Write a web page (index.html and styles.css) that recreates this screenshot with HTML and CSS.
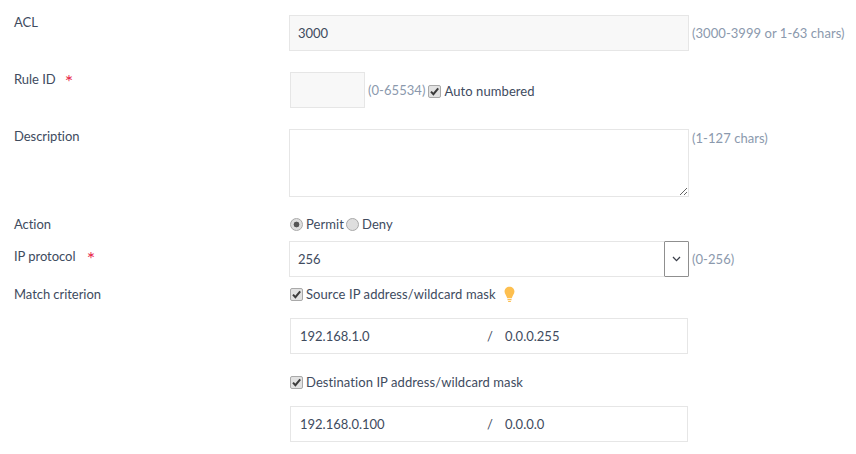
FILE: index.html
```html
<!DOCTYPE html>
<html lang="en">
<head>
<meta charset="utf-8">
<title>ACL rule</title>
<link rel="stylesheet" href="styles.css">
</head>
<body>
<form class="form">
  <div class="row row-acl">
    <label class="label">ACL</label>
    <div class="control">
      <input class="field field-wide field-muted" type="text" value="3000">
      <span class="hint">(3000-3999 or 1-63 chars)</span>
    </div>
  </div>
  <div class="row row-rule">
    <label class="label">Rule ID <span class="req">*</span></label>
    <div class="control control-rule">
      <input class="field field-short field-muted" type="text">
      <span class="hint">(0-65534)</span>
      <span class="check-item">
        <span class="box"><svg viewBox="0 0 13 13" width="13" height="13"><path d="M3 6.600 5.400 9.200 10.200 3.400" fill="none" stroke="#3c3c3c" stroke-width="2"/></svg></span>
        <span class="opt">Auto numbered</span>
      </span>
    </div>
  </div>
  <div class="row row-desc">
    <label class="label">Description</label>
    <div class="control control-top">
      <textarea class="area"></textarea>
      <span class="hint hint-top">(1-127 chars)</span>
    </div>
  </div>
  <div class="row row-action">
    <label class="label label-line">Action</label>
    <div class="control control-radio">
      <span class="radio radio-on"></span><span class="opt">Permit</span>
      <span class="radio"></span><span class="opt">Deny</span>
    </div>
  </div>
  <div class="row row-proto">
    <label class="label label-proto">IP protocol <span class="req req-proto">*</span></label>
    <div class="control">
      <div class="combo">
        <input class="combo-input" type="text" value="256">
        <span class="combo-btn"><svg viewBox="0 0 9 6" width="9" height="6"><path d="M1 1 4.500 4.600 8 1" fill="none" stroke="#3a3f4a" stroke-width="1.300"/></svg></span>
      </div>
      <span class="hint">(0-256)</span>
    </div>
  </div>
  <div class="row row-match">
    <label class="label label-line">Match criterion</label>
    <div class="match">
      <div class="check-line">
        <span class="box"><svg viewBox="0 0 13 13" width="13" height="13"><path d="M3 6.600 5.400 9.200 10.200 3.400" fill="none" stroke="#3c3c3c" stroke-width="2"/></svg></span>
        <span class="opt">Source IP address/wildcard mask</span>
        <svg class="bulb" viewBox="0 0 12 18" width="11" height="17"><path d="M6 .5C2.900.5.600 2.800.600 5.700c0 2.900 2.300 4.400 2.900 7.300h5c.6-2.900 2.900-4.400 2.900-7.300C11.400 2.800 9.100.5 6 .5Z" fill="#fdbf4f"/><path d="M3.800 14h4.400v1.200H3.800zM4.500 16h3v1.200h-3z" fill="#fdbf4f"/></svg>
      </div>
      <div class="ip-field">
        <span class="ip-addr">192.168.1.0</span><span class="ip-sep">/</span><span>0.0.0.255</span>
      </div>
      <div class="check-line check-line-second">
        <span class="box"><svg viewBox="0 0 13 13" width="13" height="13"><path d="M3 6.600 5.400 9.200 10.200 3.400" fill="none" stroke="#3c3c3c" stroke-width="2"/></svg></span>
        <span class="opt">Destination IP address/wildcard mask</span>
      </div>
      <div class="ip-field">
        <span class="ip-addr">192.168.0.100</span><span class="ip-sep">/</span><span>0.0.0.0</span>
      </div>
    </div>
  </div>
</form>
</body>
</html>
```
FILE: styles.css
```css
* { box-sizing: border-box; }
html, body { margin: 0; padding: 0; background: #fff; }
body {
  width: 856px;
  height: 454px;
  overflow: hidden;
  font-family: Lato, "Noto Sans", sans-serif;
  font-size: 13px;
  color: #404b5e;
}
.form { padding: 15px 0 0 14px; }
.row { display: grid; grid-template-columns: 275px 1fr; }
.row-acl, .row-rule { margin-bottom: 21px; }
.row-desc { margin-bottom: 17px; }
.row-action { margin-bottom: 7px; }
.row-proto { margin-bottom: 7px; }
.label { display: block; line-height: 14px; letter-spacing: -0.05px; }
.label-line { line-height: 20px; }
.label-proto { padding-top: 8px; }
.req {
  color: #e8284a;
  margin-left: 6px;
  font-size: 20px;
  line-height: 0;
  vertical-align: -5px;
}
.req-proto { margin-left: 8px; }
.control { display: flex; align-items: center; }
.control-top { align-items: flex-start; }
.control-rule { padding-left: 1px; }
.field, .area, .combo-input, .ip-field {
  font: inherit;
  color: inherit;
  border: 1px solid #e6e6e6;
  background: #fff;
  outline: none;
  border-radius: 0;
}
.field { height: 36px; padding: 0 8px; }
.field-wide { width: 400px; }
.field-short { width: 75px; }
.field-muted { background: #f8f8f8; }
.area { display: block; width: 400px; height: 68px; padding: 4px 8px; resize: both; }
.hint { color: #8b99ad; margin-left: 3px; white-space: nowrap; letter-spacing: 0.05px; }
.control-rule .hint { margin-right: 3px; }
.hint-top { line-height: 14px; margin-top: 2px; }
.control-radio { height: 20px; padding-left: 1px; }
.radio {
  width: 13px;
  height: 13px;
  border: 1px solid #a9a9a9;
  border-radius: 50%;
  background: #dedede;
  margin-right: 3px;
  flex: none;
}
.radio-on { background: radial-gradient(circle, #555 0 2.6px, #dedede 3.2px); }
.opt { white-space: nowrap; letter-spacing: 0.08px; }
.opt + .radio { margin-left: 2px; }
.check-item { display: flex; align-items: center; margin-top: 2px; }
.box {
  display: block;
  width: 13px;
  height: 13px;
  border: 1px solid #a9a9a9;
  border-radius: 2px;
  background: #e2e2e2;
  margin-right: 3px;
  flex: none;
}
.box svg { display: block; margin: -1px; }
.combo { display: flex; width: 400px; height: 36px; }
.combo-input { flex: 1; min-width: 0; padding: 0 8px; border-right: 0; }
.combo-btn {
  width: 25px;
  border: 1px solid #8f8f8f;
  display: flex;
  align-items: center;
  justify-content: center;
  flex: none;
  border-radius: 1px;
}
.match { display: flex; flex-direction: column; padding-left: 1px; }
.check-line { display: flex; align-items: center; height: 20px; margin-bottom: 14px; }
.check-line-second { margin-top: 18px; }
.bulb { margin-left: 8px; }
.ip-field { display: flex; align-items: center; width: 398px; height: 36px; padding: 0 9px; }
.ip-addr { width: 187px; }
.ip-sep { width: 18px; }
```
